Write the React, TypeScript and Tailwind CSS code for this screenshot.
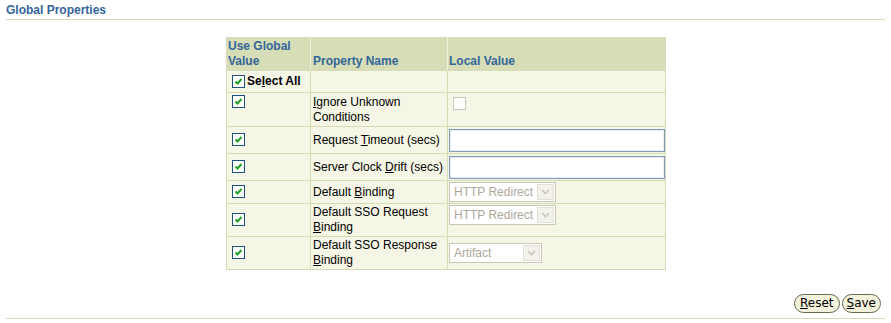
import React from "react";

const Check = () => (
  <span className="inline-flex items-center justify-center w-[13px] h-[13px] border border-[#1c5180] bg-white">
    <svg width="9" height="9" viewBox="0 0 9 9">
      <path d="M1.5 4.5 L3.5 6.5 L7.5 2" stroke="#21a121" strokeWidth="2" fill="none" />
    </svg>
  </span>
);

const U = ({ children }: { children: React.ReactNode }) => <span className="underline">{children}</span>;

const Select = ({ label, w }: { label: string; w: string }) => (
  <div className={`flex h-[20px] border border-[#c9c7ba] bg-white ${w}`}>
    <span className="flex-1 pl-[4px] leading-[18px] text-[#aca899]">{label}</span>
    <span className="w-[17px] m-[1px] bg-[#f2f1ea] border border-[#e2e0d6] flex items-center justify-center">
      <svg width="9" height="6" viewBox="0 0 9 6">
        <path d="M1 1 L4.5 4.5 L8 1" stroke="#c9c7ba" strokeWidth="1.6" fill="none" />
      </svg>
    </span>
  </div>
);

const TextInput = () => (
  <div className="h-[23px] w-[216px] border border-[#7f9db9] bg-white shadow-[inset_0_0_0_1px_#e9ecf0]" />
);

export default function App() {
  const td = "border border-[#d5dcb5] bg-[#f5f6e6] align-middle";
  return (
    <div className="w-[891px] h-[323px] bg-white text-[12px] text-black relative" style={{ fontFamily: '"Liberation Sans", Arial, sans-serif' }}>
      <div className="pt-[3px] px-[6px]">
        <div className="text-[12px] font-bold text-[#336699] leading-[15px] border-b border-[#d6dcb4] pb-[1px]">Global Properties</div>
      </div>
      <div className="flex justify-center pt-[17px]">
        <table className="border-collapse relative left-[0.5px]" style={{ tableLayout: "fixed" }}>
          <colgroup>
            <col style={{ width: 84 }} />
            <col style={{ width: 137 }} />
            <col style={{ width: 218 }} />
          </colgroup>
          <thead>
            <tr className="h-[33px]">
              <th className="bg-[#d7ddb6] border border-[#d7ddb6] border-r-[#eef1de] text-left align-bottom font-bold text-[#336699] leading-[15px] pl-[1px] pb-[1px]">Use Global<br />Value</th>
              <th className="bg-[#d7ddb6] border border-[#d7ddb6] border-r-[#eef1de] text-left align-bottom font-bold text-[#336699] leading-[15px] pl-[2px] pb-[1px]">Property Name</th>
              <th className="bg-[#d7ddb6] border border-[#d7ddb6] text-left align-bottom font-bold text-[#336699] leading-[15px] pl-[1px] pb-[1px]">Local Value</th>
            </tr>
          </thead>
          <tbody className="leading-[15px]">
            <tr className="h-[22px]">
              <td className={`${td} pl-[5px]`}>
                <span className="inline-flex items-center gap-[2px] font-bold"><Check /><span>Se<U>l</U>ect All</span></span>
              </td>
              <td className={td}></td>
              <td className={td}></td>
            </tr>
            <tr className="h-[34px]">
              <td className={`${td} !align-top pl-[5px] pt-[2px]`}><Check /></td>
              <td className={`${td} pl-[2px] !align-middle`}><U>I</U>gnore Unknown Conditions</td>
              <td className={`${td} !align-top pl-[5px] pt-[4px]`}>
                <span className="block w-[13px] h-[13px] border border-[#c9c7ba] bg-white" />
              </td>
            </tr>
            <tr className="h-[27px]">
              <td className={`${td} pl-[5px]`}><Check /></td>
              <td className={`${td} pl-[2px] whitespace-nowrap`}>Request <U>T</U>imeout (secs)</td>
              <td className={`${td} pl-[1px]`}><TextInput /></td>
            </tr>
            <tr className="h-[27px]">
              <td className={`${td} pl-[5px]`}><Check /></td>
              <td className={`${td} pl-[2px] whitespace-nowrap`}>Server Clock <U>D</U>rift (secs)</td>
              <td className={`${td} pl-[1px]`}><TextInput /></td>
            </tr>
            <tr className="h-[23px]">
              <td className={`${td} pl-[5px]`}><Check /></td>
              <td className={`${td} pl-[2px]`}>Default <U>B</U>inding</td>
              <td className={`${td} pl-[1px]`}><Select label="HTTP Redirect" w="w-[107px]" /></td>
            </tr>
            <tr className="h-[33px]">
              <td className={`${td} pl-[5px]`}><Check /></td>
              <td className={`${td} pl-[2px]`}>Default SSO Request <U>B</U>inding</td>
              <td className={`${td} pl-[1px] !align-top pt-[1px]`}><Select label="HTTP Redirect" w="w-[107px]" /></td>
            </tr>
            <tr className="h-[33px]">
              <td className={`${td} pl-[5px]`}><Check /></td>
              <td className={`${td} pl-[2px]`}>Default SSO Response <U>B</U>inding</td>
              <td className={`${td} pl-[1px]`}><Select label="Artifact" w="w-[93px]" /></td>
            </tr>
          </tbody>
        </table>
      </div>
      <div className="absolute left-0 right-0 top-[294px] px-[6px]">
        <div className="flex justify-end gap-[2px] pr-[4px]" style={{ fontFamily: '"DejaVu Sans", Verdana, sans-serif' }}>
          <button className="h-[19px] px-[5px] rounded-full border border-[#6b6a52] bg-[#f3f2dc] text-[12px] leading-[17px] text-black"><U>R</U>eset</button>
          <button className="h-[19px] px-[4px] rounded-full border border-[#6b6a52] bg-[#f3f2dc] text-[12px] leading-[17px] text-black"><U>S</U>ave</button>
        </div>
        <div className="mt-[5px] border-b border-[#d6dcb4]" />
      </div>
    </div>
  );
}
